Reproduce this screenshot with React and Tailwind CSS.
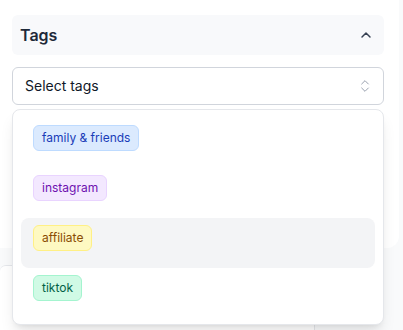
import { ChevronUp, ChevronsUpDown } from 'lucide-react';

const TAGS = [
  { label: 'family & friends', cls: 'bg-blue-100 border-blue-200 text-blue-800' },
  { label: 'instagram', cls: 'bg-purple-100 border-purple-200 text-purple-800' },
  { label: 'affiliate', cls: 'bg-yellow-100 border-yellow-200 text-yellow-800', active: true },
  { label: 'tiktok', cls: 'bg-emerald-100 border-emerald-200 text-emerald-800' },
];

export default function App() {
  return (
    <div
      className="h-[330px] w-[403px] overflow-hidden bg-gray-50"
      style={{ fontFamily: 'Inter, "Noto Sans", sans-serif' }}
    >
      {/* Filter panel */}
      <div className="w-[399px] h-[248px] bg-white rounded-br-xl pl-3 pr-[15px] pt-[15px]">
        <div className="h-10 flex items-center justify-between rounded-md bg-[#f8f9fb] pl-2 pr-[10px]">
          <span className="text-base font-semibold text-gray-800">Tags</span>
          <ChevronUp size={16} strokeWidth={2.2} className="text-gray-700" />
        </div>

        <div className="relative mt-3">
          <button className="w-full h-[38px] flex items-center justify-between rounded-md border border-gray-300 bg-white pl-3 pr-[10px] text-sm text-gray-900">
            Select tags
            <ChevronsUpDown size={16} strokeWidth={1.5} className="text-gray-400" />
          </button>

          {/* Dropdown */}
          <div className="absolute left-0 right-0 top-full mt-1 z-10 rounded-lg border border-gray-200 bg-white shadow-lg px-2 pt-2 pb-[6px] flex flex-col">
            {TAGS.map((tag) => (
              <div
                key={tag.label}
                className={`h-[50px] flex items-start pt-[7px] px-3 rounded-lg ${tag.active ? 'bg-gray-100' : ''}`}
              >
                <span className={`rounded-md border px-2 py-[3px] text-xs leading-[18px] ${tag.cls}`}>
                  {tag.label}
                </span>
              </div>
            ))}
          </div>
        </div>
      </div>

      {/* Card underneath */}
      <div className="mt-[17px] flex h-[80px] w-[400px]">
        <div className="w-[315px] rounded-tl-md border-t border-r border-gray-200 bg-white" />
        <div className="flex-1" />
      </div>
    </div>
  );
}
